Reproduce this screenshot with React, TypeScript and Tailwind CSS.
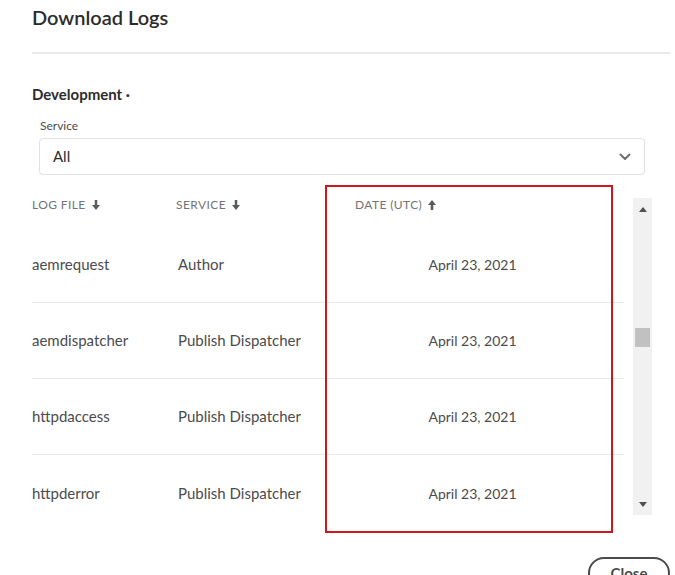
import * as React from "react";

const rows = [
  { file: "aemrequest", service: "Author", date: "April 23, 2021" },
  { file: "aemdispatcher", service: "Publish Dispatcher", date: "April 23, 2021" },
  { file: "httpdaccess", service: "Publish Dispatcher", date: "April 23, 2021" },
  { file: "httpderror", service: "Publish Dispatcher", date: "April 23, 2021" },
];

function SortArrow({ up }: { up?: boolean }) {
  return (
    <svg
      width="8"
      height="10"
      viewBox="0 0 8 10"
      className={up ? "rotate-180" : ""}
      fill="#5a5a5a"
    >
      <rect x="2.75" y="0" width="2.5" height="5.5" />
      <path d="M0 5 L8 5 L4 10 Z" />
    </svg>
  );
}

function Scrollbar() {
  return (
    <div className="flex h-full w-[19px] flex-col items-center bg-[#f1f1f1]">
      <div className="flex h-[22px] w-full items-center justify-center">
        <svg width="8" height="5" viewBox="0 0 8 5">
          <path d="M0 5 L4 0 L8 5 Z" fill="#505050" />
        </svg>
      </div>
      {/* thumb sits part way down the track */}
      <div className="mt-[108px] h-[19px] w-[15px] bg-[#c1c1c1]" />
      <div className="flex-1" />
      <div className="flex h-[22px] w-full items-center justify-center">
        <svg width="8" height="5" viewBox="0 0 8 5">
          <path d="M0 0 L8 0 L4 5 Z" fill="#505050" />
        </svg>
      </div>
    </div>
  );
}

export default function App() {
  return (
    <div
      className="relative h-[575px] w-[675px] overflow-hidden bg-white pl-[32px] pr-[5px] text-[#4b4b4b]"
      style={{ fontFamily: "Lato, 'Open Sans', sans-serif" }}
    >
      {/* Header */}
      <h1 className="pt-[5px] text-[20px] leading-[24px] font-semibold text-[#2c2c2c]">
        Download Logs
      </h1>
      <div className="mt-[23px] h-[2px] bg-[#e8e8e8]" />

      {/* Environment + service filter */}
      <div className="mt-[30px] text-[15px] leading-[20px] font-bold text-[#2c2c2c]">
        Development ·
      </div>
      <div className="ml-[7px] w-[606px]">
        <label className="mt-[14px] block pl-[1px] text-[12px] leading-[16px] text-[#4b4b4b]">
          Service
        </label>
        <div className="mt-[4px] flex h-[37px] items-center justify-between rounded-[4px] border border-[#e1e1e1] pr-[13px] pl-[13px]">
          <span className="text-[15px] text-[#2c2c2c]">All</span>
          <svg width="12" height="8" viewBox="0 0 12 8" fill="none">
            <path
              d="M1.5 1.5 L6 6 L10.5 1.5"
              stroke="#6e6e6e"
              strokeWidth="2"
              strokeLinecap="round"
              strokeLinejoin="round"
            />
          </svg>
        </div>
      </div>

      {/* Log table */}
      <div className="mt-[23px] flex h-[317px] w-[620px]">
        <div className="w-[592px] overflow-hidden">
          <div className="grid h-[29px] grid-cols-[144px_179px_235px_1fr] items-start text-[12px] leading-[14px] tracking-[0.4px] text-[#747474] uppercase">
            <div className="flex items-center gap-[6px]">
              Log File <SortArrow />
            </div>
            <div className="flex items-center gap-[6px]">
              Service <SortArrow />
            </div>
            <div className="flex items-center gap-[6px]">
              Date (UTC) <SortArrow up />
            </div>
          </div>
          {rows.map((row, i) => (
            <div
              key={row.file}
              className={
                "grid h-[76px] grid-cols-[144px_179px_235px_1fr] items-center text-[15px] " +
                (i < rows.length - 1 ? "border-b border-[#e8e8e8]" : "")
              }
            >
              <div>{row.file}</div>
              <div className="pl-[2px]">{row.service}</div>
              <div className="text-center text-[14px]">{row.date}</div>
            </div>
          ))}
        </div>
        <div className="ml-[9px] flex">
          <Scrollbar />
        </div>
      </div>

      {/* Footer */}
      <div className="mt-[42px] flex justify-end">
        <button className="h-[32px] w-[82px] rounded-full border-2 border-[#4b4b4b] text-[15px] font-bold text-[#4b4b4b]">
          Close
        </button>
      </div>

      {/* highlight annotation over the date column */}
      <div className="pointer-events-none absolute top-[185px] left-[325px] h-[348px] w-[288px] border-2 border-[#d0161d]" />
    </div>
  );
}
